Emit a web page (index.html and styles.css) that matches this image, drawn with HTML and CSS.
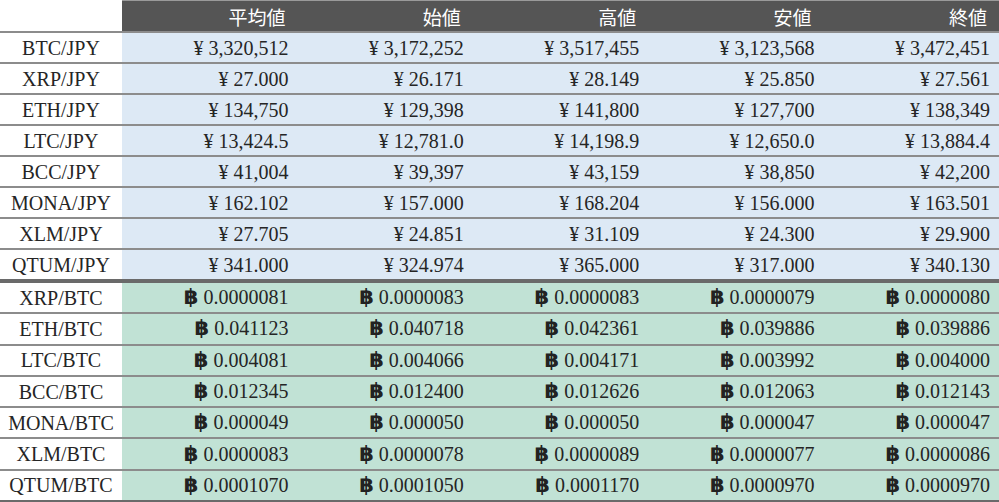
FILE: index.html
```html
<!DOCTYPE html>
<html lang="ja">
<head>
<meta charset="utf-8">
<link rel="stylesheet" href="styles.css">
</head>
<body>
<table class="rates">
  <colgroup>
    <col class="c-pair">
    <col class="c-val">
    <col class="c-val">
    <col class="c-val">
    <col class="c-val">
    <col class="c-val">
  </colgroup>
  <thead>
    <tr>
      <th class="corner"></th>
      <th>平均値</th>
      <th>始値</th>
      <th>高値</th>
      <th>安値</th>
      <th>終値</th>
    </tr>
  </thead>
  <tbody class="jpy">
    <tr><td class="pair">BTC/JPY</td><td>¥ 3,320,512</td><td>¥ 3,172,252</td><td>¥ 3,517,455</td><td>¥ 3,123,568</td><td>¥ 3,472,451</td></tr>
    <tr><td class="pair">XRP/JPY</td><td>¥ 27.000</td><td>¥ 26.171</td><td>¥ 28.149</td><td>¥ 25.850</td><td>¥ 27.561</td></tr>
    <tr><td class="pair">ETH/JPY</td><td>¥ 134,750</td><td>¥ 129,398</td><td>¥ 141,800</td><td>¥ 127,700</td><td>¥ 138,349</td></tr>
    <tr><td class="pair">LTC/JPY</td><td>¥ 13,424.5</td><td>¥ 12,781.0</td><td>¥ 14,198.9</td><td>¥ 12,650.0</td><td>¥ 13,884.4</td></tr>
    <tr><td class="pair">BCC/JPY</td><td>¥ 41,004</td><td>¥ 39,397</td><td>¥ 43,159</td><td>¥ 38,850</td><td>¥ 42,200</td></tr>
    <tr><td class="pair">MONA/JPY</td><td>¥ 162.102</td><td>¥ 157.000</td><td>¥ 168.204</td><td>¥ 156.000</td><td>¥ 163.501</td></tr>
    <tr><td class="pair">XLM/JPY</td><td>¥ 27.705</td><td>¥ 24.851</td><td>¥ 31.109</td><td>¥ 24.300</td><td>¥ 29.900</td></tr>
    <tr class="group-end"><td class="pair">QTUM/JPY</td><td>¥ 341.000</td><td>¥ 324.974</td><td>¥ 365.000</td><td>¥ 317.000</td><td>¥ 340.130</td></tr>
  </tbody>
  <tbody class="btc">
    <tr><td class="pair">XRP/BTC</td><td><span class="b">฿</span> 0.0000081</td><td><span class="b">฿</span> 0.0000083</td><td><span class="b">฿</span> 0.0000083</td><td><span class="b">฿</span> 0.0000079</td><td><span class="b">฿</span> 0.0000080</td></tr>
    <tr><td class="pair">ETH/BTC</td><td><span class="b">฿</span> 0.041123</td><td><span class="b">฿</span> 0.040718</td><td><span class="b">฿</span> 0.042361</td><td><span class="b">฿</span> 0.039886</td><td><span class="b">฿</span> 0.039886</td></tr>
    <tr><td class="pair">LTC/BTC</td><td><span class="b">฿</span> 0.004081</td><td><span class="b">฿</span> 0.004066</td><td><span class="b">฿</span> 0.004171</td><td><span class="b">฿</span> 0.003992</td><td><span class="b">฿</span> 0.004000</td></tr>
    <tr><td class="pair">BCC/BTC</td><td><span class="b">฿</span> 0.012345</td><td><span class="b">฿</span> 0.012400</td><td><span class="b">฿</span> 0.012626</td><td><span class="b">฿</span> 0.012063</td><td><span class="b">฿</span> 0.012143</td></tr>
    <tr><td class="pair">MONA/BTC</td><td><span class="b">฿</span> 0.000049</td><td><span class="b">฿</span> 0.000050</td><td><span class="b">฿</span> 0.000050</td><td><span class="b">฿</span> 0.000047</td><td><span class="b">฿</span> 0.000047</td></tr>
    <tr><td class="pair">XLM/BTC</td><td><span class="b">฿</span> 0.0000083</td><td><span class="b">฿</span> 0.0000078</td><td><span class="b">฿</span> 0.0000089</td><td><span class="b">฿</span> 0.0000077</td><td><span class="b">฿</span> 0.0000086</td></tr>
    <tr class="last"><td class="pair">QTUM/BTC</td><td><span class="b">฿</span> 0.0001070</td><td><span class="b">฿</span> 0.0001050</td><td><span class="b">฿</span> 0.0001170</td><td><span class="b">฿</span> 0.0000970</td><td><span class="b">฿</span> 0.0000970</td></tr>
  </tbody>
</table>
</body>
</html>
```

FILE: styles.css
```css
html, body {
  margin: 0;
  padding: 0;
  background: #ffffff;
}

.rates {
  width: 999px;
  border-collapse: collapse;
  table-layout: fixed;
  font-family: "Liberation Serif", "Noto Sans CJK JP", serif;
  font-size: 20px;
  color: #252525;
}

.c-pair {
  width: 122px;
}

.c-val {
  width: 175.4px;
}

.rates th,
.rates td {
  padding: 0 9px 0 0;
  text-align: right;
  white-space: nowrap;
  line-height: 1;
  overflow: hidden;
}

.rates thead th {
  height: 30px;
  padding-right: 12px;
  background: #555555;
  color: #ffffff;
  font-family: "Noto Sans CJK JP", "Noto Sans", sans-serif;
  font-weight: 400;
  font-size: 19px;
  border-top: 1px solid #9a9a9a;
  border-bottom: 2px solid #8c8c8c;
}

.rates thead th.corner {
  background: #ffffff;
  border-top: 1px solid #ffffff;
  padding: 0;
}

.rates td {
  height: 29px;
  border-bottom: 2px solid #8c8c8c;
}

.rates .btc td {
  height: 29.3px;
}

.rates td.pair {
  background: #ffffff;
  text-align: center;
  padding: 0;
}

.jpy td {
  background: #dde9f5;
}

.btc td {
  background: #c1e2d5;
}

.rates tr.group-end td {
  border-bottom: 4px solid #6a6a6a;
}

.rates tr.last td {
  border-bottom: 3px solid #6a6a6a;
}

.b {
  font-family: "DejaVu Sans", sans-serif;
  font-weight: 700;
  font-size: 21px;
  color: #222222;
}
```
